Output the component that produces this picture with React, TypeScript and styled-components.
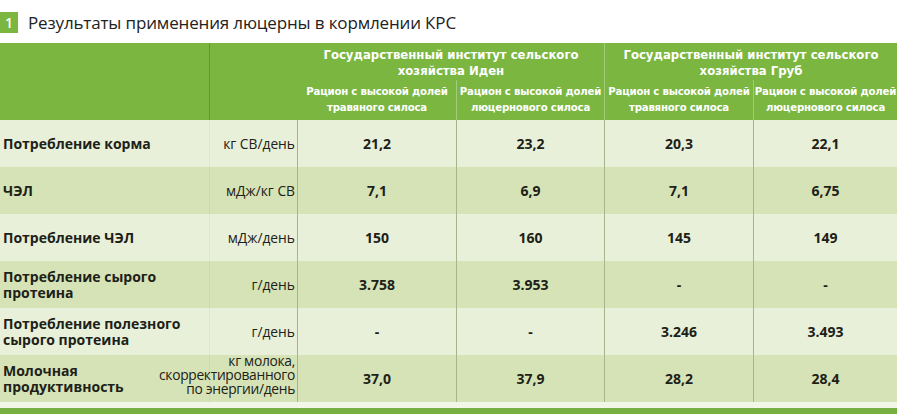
import React from 'react';
import styled, { createGlobalStyle } from 'styled-components';

// Data
//----------------------------------------------
type Row = {
  label: string[];
  unit: string[];
  values: string[];
};

const rows: Array<Row> = [
  { label: ['Потребление корма'], unit: ['кг СВ/день'], values: ['21,2', '23,2', '20,3', '22,1'] },
  { label: ['ЧЭЛ'], unit: ['мДж/кг СВ'], values: ['7,1', '6,9', '7,1', '6,75'] },
  { label: ['Потребление ЧЭЛ'], unit: ['мДж/день'], values: ['150', '160', '145', '149'] },
  {
    label: ['Потребление сырого', 'протеина'],
    unit: ['г/день'],
    values: ['3.758', '3.953', '-', '-'],
  },
  {
    label: ['Потребление полезного', 'сырого протеина'],
    unit: ['г/день'],
    values: ['-', '-', '3.246', '3.493'],
  },
  {
    label: ['Молочная', 'продуктивность'],
    unit: ['кг молока,', 'скорректированного', 'по энергии/день'],
    values: ['37,0', '37,9', '28,2', '28,4'],
  },
];

const groups = [
  ['Государственный институт сельского', 'хозяйства Иден'],
  ['Государственный институт сельского', 'хозяйства Груб'],
];

const diets = [
  ['Рацион с высокой долей', 'травяного силоса'],
  ['Рацион с высокой долей', 'люцернового силоса'],
];

const lines = (parts: string[]) =>
  parts.map((p, i) => <span key={i}>{p}</span>);

const App: React.FC = () => {
  return (
    <>
      <GlobalStyle />
      <DivPage>
        <DivTitleBar>
          <DivBadge>1</DivBadge>
          <DivTitle>Результаты применения люцерны в кормлении КРС</DivTitle>
        </DivTitleBar>

        <DivGrid>
          <DivHeadBlank $divider />
          <DivHeadBlank />
          {groups.map((g, i) => (
            <DivGroup key={i} $col={3 + i * 2} $divider={i === 0}>
              {lines(g)}
            </DivGroup>
          ))}
          {[0, 1, 2, 3].map((i) => (
            <DivDiet key={i} $col={3 + i} $divider={i < 3}>
              {lines(diets[i % 2])}
            </DivDiet>
          ))}

          {rows.map((row, r) => (
            <React.Fragment key={r}>
              <DivLabel $dark={r % 2 === 1}>{lines(row.label)}</DivLabel>
              <DivUnit $dark={r % 2 === 1} $small={row.unit.length > 1}>
                {lines(row.unit)}
              </DivUnit>
              {row.values.map((v, i) => (
                <DivValue key={i} $dark={r % 2 === 1} $last={i === 3}>
                  {v}
                </DivValue>
              ))}
            </React.Fragment>
          ))}
        </DivGrid>

        <DivFooterStrip />
        <DivFooterBar />
      </DivPage>
    </>
  );
};

// Styles
//----------------------------------------------
const GlobalStyle = createGlobalStyle`
  html, body {
    margin: 0;
    padding: 0;
    background: #ffffff;
  }
  body {
    font-family: 'Open Sans', 'Noto Sans', sans-serif;
    color: #1d2117;
  }
`;

const DivPage = styled.div`
  width: 897px;
  padding-top: 12px;
`;

const DivTitleBar = styled.div`
  height: 31px;
  display: flex;
  align-items: flex-start;
  gap: 10px;
`;

const DivBadge = styled.div`
  width: 18px;
  height: 21px;
  background: #7ab640;
  color: #ffffff;
  font-size: 14px;
  font-weight: 600;
  display: flex;
  align-items: center;
  justify-content: center;
`;

const DivTitle = styled.div`
  font-size: 17px;
  line-height: 22px;
  color: #222222;
  letter-spacing: -0.15px;
`;

const DivGrid = styled.div`
  display: grid;
  grid-template-columns: 210px 88px 159px 148px 149px 1fr;
  grid-template-rows: 37px 40px repeat(6, 47px);
`;

const DivHeadBlank = styled.div<{ $divider?: boolean }>`
  grid-row: 1 / span 2;
  background: #7ab640;
  border-right: ${(p) => (p.$divider ? '1px solid #5f9a2c' : 'none')};
`;

const DivGroup = styled.div<{ $col: number; $divider?: boolean }>`
  grid-row: 1;
  grid-column: ${(p) => p.$col} / span 2;
  background: #7ab640;
  border-right: ${(p) => (p.$divider ? '1px solid #a2cd78' : 'none')};
  color: #ffffff;
  font-family: 'DejaVu Sans Condensed', 'DejaVu Sans', sans-serif;
  font-weight: 700;
  font-size: 13px;
  line-height: 16px;
  display: flex;
  flex-direction: column;
  align-items: center;
  justify-content: center;
  padding-top: 2px;
  text-align: center;
`;

const DivDiet = styled.div<{ $col: number; $divider?: boolean }>`
  grid-row: 2;
  grid-column: ${(p) => p.$col};
  background: #7ab640;
  border-right: ${(p) => (p.$divider ? '1px solid #a2cd78' : 'none')};
  color: #ffffff;
  font-family: 'DejaVu Sans Condensed', 'DejaVu Sans', sans-serif;
  font-weight: 700;
  font-size: 11.3px;
  line-height: 16px;
  letter-spacing: -0.2px;
  white-space: nowrap;
  display: flex;
  flex-direction: column;
  align-items: center;
  justify-content: center;
`;

const DivCell = styled.div<{ $dark?: boolean }>`
  background: ${(p) => (p.$dark ? '#d5e3b6' : '#e8f0da')};
  display: flex;
  flex-direction: column;
  justify-content: center;
`;

const DivLabel = styled(DivCell)`
  padding-left: 3px;
  font-size: 14px;
  font-weight: 700;
  line-height: 16px;
  border-right: 1px solid ${(p) => (p.$dark ? '#cbd9ab' : '#dfe8cf')};
`;

const DivUnit = styled(DivCell)<{ $small?: boolean }>`
  align-items: flex-end;
  padding-right: 2px;
  font-size: 13.8px;
  line-height: ${(p) => (p.$small ? '14px' : '16px')};
  white-space: nowrap;
  letter-spacing: ${(p) => (p.$small ? '-0.3px' : '0')};
  padding-bottom: ${(p) => (p.$small ? '8px' : '0')};
  border-right: 1px solid #a8b58c;
`;

const DivValue = styled(DivCell)<{ $last?: boolean }>`
  align-items: center;
  font-size: 14px;
  font-weight: 700;
  border-right: ${(p) => (p.$last ? 'none' : '1px solid #a8b58c')};
`;

const DivFooterStrip = styled.div`
  height: 6px;
  background: #f1f6e8;
`;

const DivFooterBar = styled.div`
  height: 6px;
  background: #76b043;
`;

export default App;
